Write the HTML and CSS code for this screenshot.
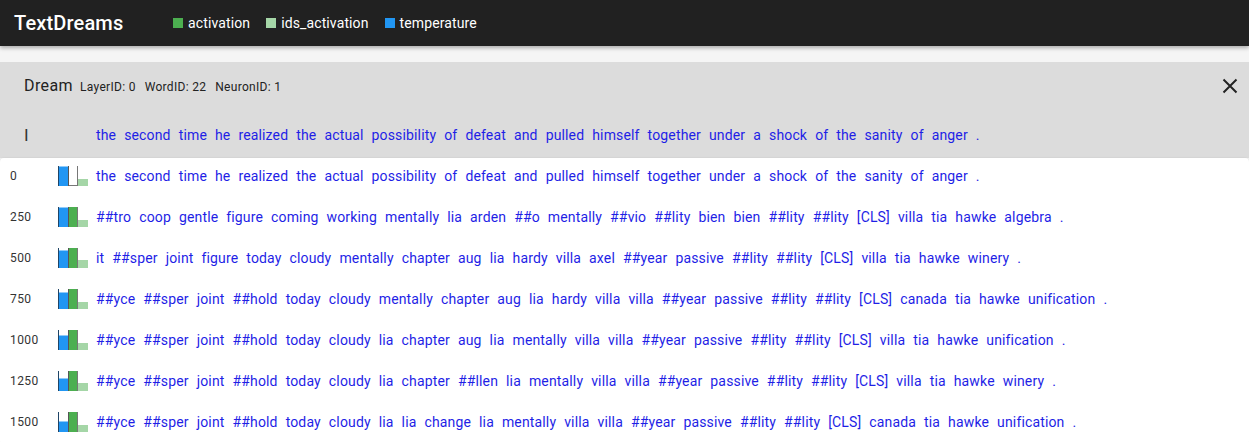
FILE: index.html
```html
<!DOCTYPE html>
<html>
<head>
<meta charset="utf-8">
<link rel="stylesheet" href="styles.css">
</head>
<body>
<header class="topbar">
  <div class="title">TextDreams</div>
  <div class="legend">
    <span class="leg"><i class="sw sw-act"></i>activation</span>
    <span class="leg"><i class="sw sw-ids"></i>ids_activation</span>
    <span class="leg"><i class="sw sw-temp"></i>temperature</span>
  </div>
</header>
<main class="main">
  <section class="dream">
    <div class="dream-head">
      <div class="dream-title">Dream</div>
      <div class="meta">LayerID: 0</div>
      <div class="meta">WordID: 22</div>
      <div class="meta">NeuronID: 1</div>
      <div class="spacer"></div>
      <svg class="close" width="16" height="16" viewBox="0 0 16 16"><path d="M1.5 1.5 L14.5 14.5 M14.5 1.5 L1.5 14.5" stroke="#222" stroke-width="2" fill="none"/></svg>
    </div>
    <div class="input-row">
      <div class="input-label">I</div>
      <div class="tokens"><span>the</span><span>second</span><span>time</span><span>he</span><span>realized</span><span>the</span><span>actual</span><span>possibility</span><span>of</span><span>defeat</span><span>and</span><span>pulled</span><span>himself</span><span>together</span><span>under</span><span>a</span><span>shock</span><span>of</span><span>the</span><span>sanity</span><span>of</span><span>anger</span><span>.</span></div>
    </div>
  </section>
  <section class="card">
    <div class="row">
      <div class="num">0</div>
      <div class="bars"><div class="slot s1"><div class="b temp" style="height:20px"></div></div><div class="slot s2"><div class="b act0" style="height:1px"></div></div><div class="slot s3"><div class="b ids" style="height:7px"></div></div></div>
      <div class="tokens"><span>the</span><span>second</span><span>time</span><span>he</span><span>realized</span><span>the</span><span>actual</span><span>possibility</span><span>of</span><span>defeat</span><span>and</span><span>pulled</span><span>himself</span><span>together</span><span>under</span><span>a</span><span>shock</span><span>of</span><span>the</span><span>sanity</span><span>of</span><span>anger</span><span>.</span></div>
    </div>
    <div class="row">
      <div class="num">250</div>
      <div class="bars"><div class="slot s1"><div class="b temp" style="height:20px"></div></div><div class="slot s2"><div class="b act" style="height:20px"></div></div><div class="slot s3"><div class="b ids" style="height:7px"></div></div></div>
      <div class="tokens"><span>##tro</span><span>coop</span><span>gentle</span><span>figure</span><span>coming</span><span>working</span><span>mentally</span><span>lia</span><span>arden</span><span>##o</span><span>mentally</span><span>##vio</span><span>##lity</span><span>bien</span><span>bien</span><span>##lity</span><span>##lity</span><span>[CLS]</span><span>villa</span><span>tia</span><span>hawke</span><span>algebra</span><span>.</span></div>
    </div>
    <div class="row">
      <div class="num">500</div>
      <div class="bars"><div class="slot s1"><div class="b temp" style="height:18px"></div></div><div class="slot s2"><div class="b act" style="height:20px"></div></div><div class="slot s3"><div class="b ids" style="height:8px"></div></div></div>
      <div class="tokens"><span>it</span><span>##sper</span><span>joint</span><span>figure</span><span>today</span><span>cloudy</span><span>mentally</span><span>chapter</span><span>aug</span><span>lia</span><span>hardy</span><span>villa</span><span>axel</span><span>##year</span><span>passive</span><span>##lity</span><span>##lity</span><span>[CLS]</span><span>villa</span><span>tia</span><span>hawke</span><span>winery</span><span>.</span></div>
    </div>
    <div class="row">
      <div class="num">750</div>
      <div class="bars"><div class="slot s1"><div class="b temp" style="height:17px"></div></div><div class="slot s2"><div class="b act" style="height:20px"></div></div><div class="slot s3"><div class="b ids" style="height:7px"></div></div></div>
      <div class="tokens"><span>##yce</span><span>##sper</span><span>joint</span><span>##hold</span><span>today</span><span>cloudy</span><span>mentally</span><span>chapter</span><span>aug</span><span>lia</span><span>hardy</span><span>villa</span><span>villa</span><span>##year</span><span>passive</span><span>##lity</span><span>##lity</span><span>[CLS]</span><span>canada</span><span>tia</span><span>hawke</span><span>unification</span><span>.</span></div>
    </div>
    <div class="row">
      <div class="num">1000</div>
      <div class="bars"><div class="slot s1"><div class="b temp" style="height:15px"></div></div><div class="slot s2"><div class="b act" style="height:20px"></div></div><div class="slot s3"><div class="b ids" style="height:7px"></div></div></div>
      <div class="tokens"><span>##yce</span><span>##sper</span><span>joint</span><span>##hold</span><span>today</span><span>cloudy</span><span>lia</span><span>chapter</span><span>aug</span><span>lia</span><span>mentally</span><span>villa</span><span>villa</span><span>##year</span><span>passive</span><span>##lity</span><span>##lity</span><span>[CLS]</span><span>villa</span><span>tia</span><span>hawke</span><span>unification</span><span>.</span></div>
    </div>
    <div class="row">
      <div class="num">1250</div>
      <div class="bars"><div class="slot s1"><div class="b temp" style="height:13px"></div></div><div class="slot s2"><div class="b act" style="height:20px"></div></div><div class="slot s3"><div class="b ids" style="height:8px"></div></div></div>
      <div class="tokens"><span>##yce</span><span>##sper</span><span>joint</span><span>##hold</span><span>today</span><span>cloudy</span><span>lia</span><span>chapter</span><span>##llen</span><span>lia</span><span>mentally</span><span>villa</span><span>villa</span><span>##year</span><span>passive</span><span>##lity</span><span>##lity</span><span>[CLS]</span><span>villa</span><span>tia</span><span>hawke</span><span>winery</span><span>.</span></div>
    </div>
    <div class="row">
      <div class="num">1500</div>
      <div class="bars"><div class="slot s1"><div class="b temp" style="height:11px"></div></div><div class="slot s2"><div class="b act" style="height:20px"></div></div><div class="slot s3"><div class="b ids" style="height:7px"></div></div></div>
      <div class="tokens"><span>##yce</span><span>##sper</span><span>joint</span><span>##hold</span><span>today</span><span>cloudy</span><span>lia</span><span>lia</span><span>change</span><span>lia</span><span>mentally</span><span>villa</span><span>villa</span><span>##year</span><span>passive</span><span>##lity</span><span>##lity</span><span>[CLS]</span><span>canada</span><span>tia</span><span>hawke</span><span>unification</span><span>.</span></div>
    </div>
  </section>
</main>
</body>
</html>
```

FILE: styles.css
```css
* { box-sizing: border-box; }
html, body { margin: 0; padding: 0; }
body {
  font-family: Roboto, "Noto Sans", sans-serif;
  background: #f5f5f5;
  color: #222;
  overflow: hidden;
}
.topbar {
  height: 46px;
  background: #212121;
  color: #fff;
  display: flex;
  align-items: center;
  padding-left: 14px;
  box-shadow: 0 2px 4px rgba(0,0,0,0.3);
  position: relative;
  z-index: 2;
}
.title {
  font-size: 20px;
  font-weight: 500;
  letter-spacing: 0.15px;
  width: 159px;
}
.legend { display: flex; align-items: center; gap: 16px; font-size: 14px; letter-spacing: 0.12px; }
.leg { display: flex; align-items: center; }
.sw { display: inline-block; width: 10px; height: 10px; margin-right: 5px; }
.sw-act { background: #4caf50; }
.sw-ids { background: #a5d6a7; }
.sw-temp { background: #2196f3; }
.main { padding-top: 16px; }
.dream { background: #dcdcdc; }
.dream-head {
  display: flex;
  align-items: baseline;
  height: 50px;
  padding: 14px 11px 0 24px;
}
.dream-title { font-size: 16px; letter-spacing: 0.4px; margin-right: 7px; color: #222; }
.meta { font-size: 12px; letter-spacing: 0.3px; margin-right: 9px; color: #222; }
.spacer { flex: 1; }
.close { align-self: flex-start; margin-top: 2px; }
.input-row {
  display: flex;
  align-items: center;
  height: 46px;
  padding-left: 24px;
}
.input-label { width: 68px; font-size: 17px; color: #333; }
.tokens { display: flex; font-size: 14px; letter-spacing: 0.15px; color: #1f1fe6; white-space: nowrap; }
.tokens span { padding: 0 4px; }
.card {
  background: #fff;
  border-radius: 4px;
  box-shadow: 0 1px 3px rgba(0,0,0,0.2);
}
.row {
  display: flex;
  align-items: center;
  height: 41px;
  padding: 8px 0 13px 10px;
}
.num { width: 48px; font-size: 12px; letter-spacing: 0.4px; color: #333; }
.bars { display: flex; align-items: flex-end; height: 20px; width: 30px; margin-right: 4px; }
.slot { width: 10px; height: 20px; display: flex; align-items: flex-end; }
.s1 { border-left: 1px solid #1f4466; }
.s2 { border-left: 1px solid #555; border-right: 1px solid #777; }
.b { width: 100%; }
.temp { background: #2196f3; border-top: 1px solid #90caf9; }
.act { background: #4caf50; }
.act0 { background: #777; }
.ids { background: #a5d6a7; }
```
